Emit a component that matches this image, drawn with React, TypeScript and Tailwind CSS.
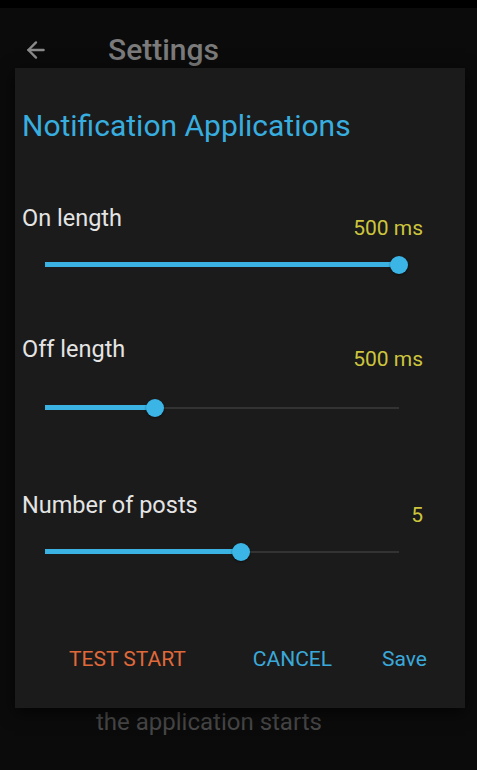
import { ArrowLeft } from "lucide-react";

type SliderProps = {
  pct: number;
};

function Slider({ pct }: SliderProps) {
  return (
    <div className="relative h-[20px] ml-[30px] w-[354px]">
      <div className="absolute left-0 right-0 top-[9px] h-[2px] bg-[#333333]" />
      <div
        className="absolute left-0 top-[7.5px] h-[5px] bg-[#3ab3e3]"
        style={{ width: `${pct}%` }}
      />
      <div
        className="absolute top-[1px] w-[18px] h-[18px] -ml-[9px] rounded-full bg-[#3ab5e6] shadow-[0_1px_2px_rgba(0,0,0,0.5)]"
        style={{ left: `${pct}%` }}
      />
    </div>
  );
}

type RowProps = {
  label: string;
  value: string;
};

function LabelRow({ label, value }: RowProps) {
  return (
    <div className="flex items-start justify-between pl-[7px] pr-[42px]">
      <span className="text-[23.5px] leading-[28px] text-[#e4e4e4]">{label}</span>
      <span className="mt-[12.3px] text-[21px] leading-[25px] text-[#cdc53e]">{value}</span>
    </div>
  );
}

export default function App() {
  return (
    <div className="relative w-[477px] h-[770px] overflow-hidden bg-[#0b0b0b] font-['Roboto',sans-serif]">
      {/* status bar */}
      <div className="h-[8px] bg-black" />

      {/* app bar (dimmed behind dialog) */}
      <div className="flex h-[84px] items-center">
        <ArrowLeft className="ml-[23px] w-[26px] h-[26px] text-[#8a8a8a]" strokeWidth={2.2} />
        <span className="ml-[59px] text-[30px] font-medium leading-[36px] text-[#7b7b7b]">Settings</span>
      </div>

      <div className="pl-[96px] pt-[616px] text-[24px] leading-[28px] text-[#474747]">
        the application starts
      </div>

      {/* dialog */}
      <div className="absolute left-[15px] top-[68px] w-[450px] h-[640px] bg-[#1b1b1b] shadow-[0_4px_16px_rgba(0,0,0,0.7)]">
        <h2 className="mt-[39.75px] pl-[7px] text-[30px] leading-[36px] text-[#38addf]">
          Notification Applications
        </h2>

        <div className="mt-[60.25px]">
          <LabelRow label="On length" value="500 ms" />
        </div>
        <div className="mt-[13.7px]">
          <Slider pct={100} />
        </div>

        <div className="mt-[60px]">
          <LabelRow label="Off length" value="500 ms" />
        </div>
        <div className="mt-[25.7px]">
          <Slider pct={31} />
        </div>

        <div className="mt-[73px]">
          <LabelRow label="Number of posts" value="5" />
        </div>
        <div className="mt-[13.7px]">
          <Slider pct={55.4} />
        </div>

        <div className="mt-[85.3px] flex justify-between pl-[54px] pr-[38px] text-[21px] leading-[25px]">
          <button className="text-[#e0693a]">TEST START</button>
          <div className="flex gap-[50px]">
            <button className="text-[#3aa9da]">CANCEL</button>
            <button className="text-[#3aa9da]">Save</button>
          </div>
        </div>
      </div>
    </div>
  );
}
